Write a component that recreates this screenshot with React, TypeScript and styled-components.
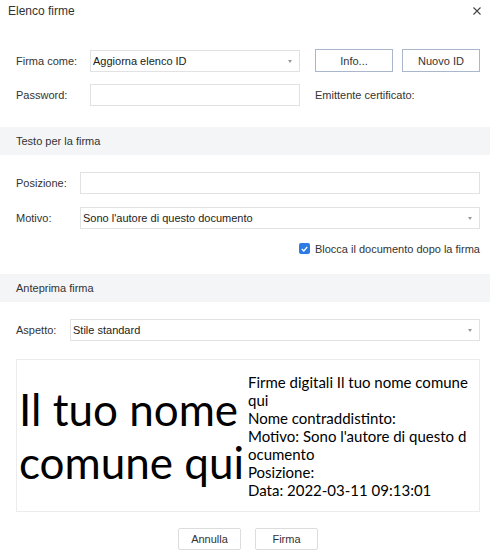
import styled, { createGlobalStyle } from "styled-components"

const GlobalStyle = createGlobalStyle`
    html, body {
        margin: 0;
        padding: 0;
        background: #fff;
    }
    body {
        font-family: "Liberation Sans", Arial, sans-serif;
        font-size: 11px;
        color: #333;
    }
`

const Dialog = styled.div`
    width: 490px;
    height: 560px;
    display: flex;
    flex-direction: column;
    background: #fff;
`

const TitleBar = styled.div`
    height: 22px;
    padding: 0 7px 0 8px;
    display: flex;
    justify-content: space-between;
    align-items: center;
    font-size: 12px;
    color: #333;
`

const CloseButton = styled.div`
    width: 12px;
    height: 12px;
    display: flex;
    align-items: center;
    justify-content: center;
    cursor: pointer;
`

const Section = styled.div<{ $top: number }>`
    padding: ${(p) => p.$top}px 10px 0 16px;
    display: flex;
    flex-direction: column;
`

const Row = styled.div<{ $gap?: number }>`
    display: flex;
    align-items: center;
    margin-top: ${(p) => p.$gap ?? 0}px;
`

const Label = styled.div<{ $width: number }>`
    width: ${(p) => p.$width}px;
    flex-shrink: 0;
    color: #333;
`

const Field = styled.div<{ $width?: number }>`
    position: relative;
    box-sizing: border-box;
    height: 22px;
    ${(p) => (p.$width ? `width: ${p.$width}px;` : "flex: 1;")}
    border: 1px solid #e2e2e2;
    background: #fff;
    display: flex;
    align-items: center;
    padding: 0 2px;
    color: #222;
`

const Arrow = styled.span`
    position: absolute;
    right: 7px;
    top: 9px;
    width: 0;
    height: 0;
    border-left: 2px solid transparent;
    border-right: 2px solid transparent;
    border-top: 3px solid #999;
`

const IdButton = styled.div<{ $left: number }>`
    box-sizing: border-box;
    width: 78px;
    height: 23px;
    margin-left: ${(p) => p.$left}px;
    border: 1px solid #a9b6cb;
    display: flex;
    align-items: center;
    justify-content: center;
    color: #333;
    cursor: pointer;
`

const Issuer = styled.div`
    margin-left: 15px;
`

const Band = styled.div<{ $top: number }>`
    margin-top: ${(p) => p.$top}px;
    height: 28px;
    background: #f4f5f7;
    display: flex;
    align-items: center;
    padding-left: 16px;
`

const CheckRow = styled.div`
    margin-top: 13px;
    height: 13px;
    display: flex;
    align-items: center;
    justify-content: flex-end;
`

const CheckBox = styled.span`
    width: 11px;
    height: 11px;
    border-radius: 2px;
    background: #2a7be6;
    display: flex;
    align-items: center;
    justify-content: center;
    margin-right: 5px;
`

const Preview = styled.div`
    margin-top: 18px;
    box-sizing: border-box;
    height: 153px;
    border: 1px solid #ececec;
    display: flex;
    align-items: center;
    font-family: Lato, "Open Sans", sans-serif;
    color: #000;
`

const BigName = styled.div`
    width: 229px;
    flex-shrink: 0;
    padding-left: 2px;
    font-size: 44px;
    line-height: 53px;
    white-space: nowrap;
`

const Details = styled.div`
    font-size: 15px;
    line-height: 18px;
    white-space: nowrap;
`

const Footer = styled.div`
    margin-top: 16px;
    display: flex;
    justify-content: center;
    gap: 14px;
`

const FooterButton = styled.div`
    box-sizing: border-box;
    width: 63px;
    height: 22px;
    border: 1px solid #dcdcdc;
    border-radius: 2px;
    display: flex;
    align-items: center;
    justify-content: center;
    color: #333;
    cursor: pointer;
`

const details = [
    "Firme digitali Il tuo nome comune",
    "qui",
    "Nome contraddistinto:",
    "Motivo: Sono l'autore di questo d",
    "ocumento",
    "Posizione:",
    "Data: 2022-03-11 09:13:01",
]

const App = () => {
    return (
        <>
            <GlobalStyle />
            <Dialog>
                <TitleBar>
                    <span>Elenco firme</span>
                    <CloseButton>
                        <svg width="8" height="8" viewBox="0 0 8 8">
                            <path d="M0.5 0.5L7.5 7.5M7.5 0.5L0.5 7.5" stroke="#444" strokeWidth="1.1" />
                        </svg>
                    </CloseButton>
                </TitleBar>

                <Section $top={27}>
                    <Row>
                        <Label $width={74}>Firma come:</Label>
                        <Field $width={210}>
                            Aggiorna elenco ID
                            <Arrow />
                        </Field>
                        <IdButton $left={15}>Info...</IdButton>
                        <IdButton $left={9}>Nuovo ID</IdButton>
                    </Row>
                    <Row $gap={12}>
                        <Label $width={74}>Password:</Label>
                        <Field $width={210} />
                        <Issuer>Emittente certificato:</Issuer>
                    </Row>
                </Section>

                <Band $top={21}>Testo per la firma</Band>

                <Section $top={17}>
                    <Row>
                        <Label $width={64}>Posizione:</Label>
                        <Field />
                    </Row>
                    <Row $gap={13}>
                        <Label $width={64}>Motivo:</Label>
                        <Field>
                            Sono l'autore di questo documento
                            <Arrow />
                        </Field>
                    </Row>
                    <CheckRow>
                        <CheckBox>
                            <svg width="7" height="6" viewBox="0 0 7 6">
                                <path d="M0.8 3L2.8 5L6.2 1" stroke="#fff" strokeWidth="1.2" fill="none" />
                            </svg>
                        </CheckBox>
                        Blocca il documento dopo la firma
                    </CheckRow>
                </Section>

                <Band $top={19}>Anteprima firma</Band>

                <Section $top={17}>
                    <Row>
                        <Label $width={54}>Aspetto:</Label>
                        <Field>
                            Stile standard
                            <Arrow />
                        </Field>
                    </Row>
                    <Preview>
                        <BigName>
                            <div>Il tuo nome</div>
                            <div>comune qui</div>
                        </BigName>
                        <Details>
                            {details.map((line, index) => (
                                <div key={index}>{line}</div>
                            ))}
                        </Details>
                    </Preview>
                    <Footer>
                        <FooterButton>Annulla</FooterButton>
                        <FooterButton>Firma</FooterButton>
                    </Footer>
                </Section>
            </Dialog>
        </>
    )
}

export default App
